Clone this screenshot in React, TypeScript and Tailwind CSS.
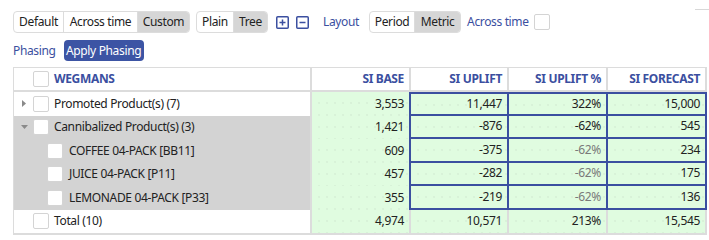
import React from "react";

const BLUE = "#3b4fa0";

function Checkbox({ className = "" }: { className?: string }) {
  return <div className={"w-[16px] h-[16px] bg-white border border-[#d4d4d4] rounded-[2px] shrink-0 " + className} />;
}

type Row = {
  label: string;
  level: 0 | 1;
  caret?: "right" | "down";
  gray: boolean;
  base: string;
  uplift: string;
  pct: string;
  pctMuted?: boolean;
  forecast: string;
  editable: boolean;
};

const rows: Row[] = [
  { label: "Promoted Product(s) (7)", level: 0, caret: "right", gray: false, base: "3,553", uplift: "11,447", pct: "322%", forecast: "15,000", editable: true },
  { label: "Cannibalized Product(s) (3)", level: 0, caret: "down", gray: true, base: "1,421", uplift: "-876", pct: "-62%", forecast: "545", editable: true },
  { label: "COFFEE 04-PACK [BB11]", level: 1, gray: true, base: "609", uplift: "-375", pct: "-62%", pctMuted: true, forecast: "234", editable: true },
  { label: "JUICE 04-PACK [P11]", level: 1, gray: true, base: "457", uplift: "-282", pct: "-62%", pctMuted: true, forecast: "175", editable: true },
  { label: "LEMONADE 04-PACK [P33]", level: 1, gray: true, base: "355", uplift: "-219", pct: "-62%", pctMuted: true, forecast: "136", editable: true },
  { label: "Total (10)", level: 0, gray: false, base: "4,974", uplift: "10,571", pct: "213%", forecast: "15,545", editable: false },
];

const dots =
  "bg-[#e0fce0] bg-[radial-gradient(circle,#cbe3cb_0.55px,transparent_0.8px)] bg-[length:8px_12px] bg-[position:3px_5px]";

export default function App() {
  return (
    <div className="relative w-[709px] h-[240px] bg-white text-[12px] tracking-[-0.35px] text-[#222] font-['Noto_Sans',sans-serif] leading-none overflow-hidden">
      <div className="absolute right-0 top-[9px] w-[14px] h-px bg-[#d8d8d8]" />
      {/* toolbar */}
      <div className="flex items-center pt-[11px] pl-[13px] h-[33px]">
        <div className="flex h-[22px] border border-[#dcdcdc] rounded-[4px] overflow-hidden">
          <div className="w-[50px] flex items-center justify-center border-r border-[#dcdcdc]">Default</div>
          <div className="w-[74px] flex items-center justify-center border-r border-[#dcdcdc]">Across time</div>
          <div className="w-[51px] flex items-center justify-center bg-[#d6d6d6]">Custom</div>
        </div>
        <div className="ml-[6px] flex h-[22px] border border-[#dcdcdc] rounded-[4px] overflow-hidden">
          <div className="w-[37px] flex items-center justify-center border-r border-[#dcdcdc]">Plain</div>
          <div className="w-[33px] flex items-center justify-center bg-[#d6d6d6]">Tree</div>
        </div>
        <svg className="ml-[8px]" width="13" height="13" viewBox="0 0 13 13">
          <rect x="0.75" y="0.75" width="11.5" height="11.5" fill="none" stroke={BLUE} strokeWidth="1.5" rx="1" />
          <path d="M3.5 6.5H9.5M6.5 3.5V9.5" stroke={BLUE} strokeWidth="1.5" />
        </svg>
        <svg className="ml-[7px]" width="13" height="13" viewBox="0 0 13 13">
          <rect x="0.75" y="0.75" width="11.5" height="11.5" fill="none" stroke={BLUE} strokeWidth="1.5" rx="1" />
          <path d="M3.5 6.5H9.5" stroke={BLUE} strokeWidth="1.5" />
        </svg>
        <div className="ml-[14px] text-[#3b4fa0]">Layout</div>
        <div className="ml-[10px] flex h-[22px] border border-[#dcdcdc] rounded-[4px] overflow-hidden">
          <div className="w-[45px] flex items-center justify-center border-r border-[#dcdcdc]">Period</div>
          <div className="w-[45px] flex items-center justify-center bg-[#d6d6d6]">Metric</div>
        </div>
        <div className="ml-[6px] text-[#3b4fa0]">Across time</div>
        <Checkbox className="ml-[5px]" />
      </div>
      {/* phasing row */}
      <div className="flex items-center pl-[13px] mt-[7px] h-[21px]">
        <div className="text-[#3b4fa0]">Phasing</div>
        <div className="ml-[8px] w-[80px] h-[21px] rounded-[4px] bg-[#3c54a4] text-white flex items-center justify-center">
          Apply Phasing
        </div>
      </div>
      {/* table */}
      <div className="ml-[13px] mt-[6px] w-[694px] border-l border-t border-b-2 border-[#dcdcdc]">
        {/* header */}
        <div className="flex h-[24px] border-b-2 border-[#dcdcdc] font-bold text-[#3b4fa0]">
          <div className="w-[298px] border-r-2 border-[#dcdcdc] flex items-center">
            <Checkbox className="ml-[19px]" />
            <div className="ml-[5px]">WEGMANS</div>
          </div>
          <div className="w-[99px] border-r-2 border-[#dcdcdc] flex items-center justify-end pr-[5px]">SI BASE</div>
          <div className="w-[98px] border-r-2 border-[#dcdcdc] flex items-center justify-end pr-[5px]">SI UPLIFT</div>
          <div className="w-[99px] border-r-2 border-[#dcdcdc] flex items-center justify-end pr-[5px]">SI UPLIFT %</div>
          <div className="w-[99px] border-r-2 border-[#dcdcdc] flex items-center justify-end pr-[5px]">SI FORECAST</div>
        </div>
        {rows.map((r, i) => {
          const edit = r.editable;
          const first = i === 0;
          const ec = edit
            ? "border-r-2 border-b-2 border-[#3b4fa0] " + (first ? "border-t-2 " : "")
            : "border-r-2 border-[#dcdcdc] ";
          return (
            <div key={i} className="flex h-[23.5px]">
              <div className={"w-[298px] border-r-2 border-[#dcdcdc] flex items-center " + (r.gray ? "bg-[#d3d3d3]" : "bg-white")}>
                <div className="w-[19px] flex justify-center pl-[1px]">
                  {r.caret === "right" && (
                    <svg width="4" height="7" viewBox="0 0 4 7">
                      <path d="M0 0L4 3.5L0 7Z" fill="#8a8a8a" />
                    </svg>
                  )}
                  {r.caret === "down" && (
                    <svg width="7" height="4" viewBox="0 0 7 4">
                      <path d="M0 0H7L3.5 4Z" fill="#8a8a8a" />
                    </svg>
                  )}
                </div>
                <Checkbox className={r.level === 1 ? "ml-[14px]" : ""} />
                <div className={r.level === 1 ? "ml-[6px]" : "ml-[5px]"}>{r.label}</div>
              </div>
              <div className={"w-[99px] flex items-center justify-end pr-[5px] " + dots + " " + (edit ? "border-r-2 border-[#3b4fa0]" : "border-r-2 border-[#dcdcdc]")}>
                {r.base}
              </div>
              <div className={"w-[98px] flex items-center justify-end pr-[5px] " + dots + " " + ec}>{r.uplift}</div>
              <div className={"w-[99px] flex items-center justify-end pr-[5px] " + dots + " " + ec + (r.pctMuted ? "text-[#7a7a7a]" : "")}>
                {r.pct}
              </div>
              <div className={"w-[99px] flex items-center justify-end pr-[5px] " + dots + " " + ec}>{r.forecast}</div>
            </div>
          );
        })}
      </div>
    </div>
  );
}
